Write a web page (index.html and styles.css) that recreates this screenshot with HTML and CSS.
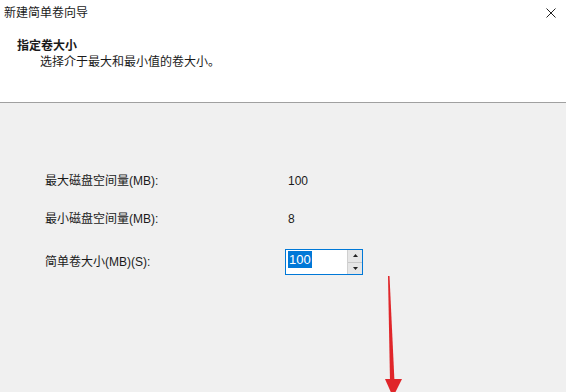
FILE: index.html
```html
<!DOCTYPE html>
<html lang="zh-CN">
<head>
<meta charset="utf-8">
<title>新建简单卷向导</title>
<link rel="stylesheet" href="styles.css">
</head>
<body>
<div class="wizard">
  <header class="header">
    <div class="titlebar">
      <span class="title">新建简单卷向导</span>
      <svg class="close" width="10" height="10" viewBox="0 0 10 10"><path d="M0.5 0.5 L9.5 9.5 M9.5 0.5 L0.5 9.5" stroke="#222" stroke-width="1" fill="none"/></svg>
    </div>
    <div class="heading">指定卷大小</div>
    <div class="subtitle">选择介于最大和最小值的卷大小。</div>
  </header>
  <main class="body">
    <div class="form">
      <div class="label">最大磁盘空间量(MB):</div>
      <div class="value">100</div>
      <div class="label">最小磁盘空间量(MB):</div>
      <div class="value">8</div>
      <div class="label">简单卷大小(MB)(S):</div>
      <div class="spin">
        <div class="spin-text"><span class="sel">100</span></div>
        <div class="spin-btns">
          <div class="btn"><svg width="5" height="3" viewBox="0 0 5 3"><path d="M0 3 L2.5 0 L5 3 Z" fill="#222"/></svg></div>
          <div class="btn"><svg width="5" height="3" viewBox="0 0 5 3"><path d="M0 0 L2.5 3 L5 0 Z" fill="#222"/></svg></div>
        </div>
      </div>
    </div>
    <svg class="arrow" width="22" height="124" viewBox="0 0 22 124">
      <polygon points="5,3 6.5,3 11.5,109 7,109" fill="#e0262a"/>
      <polygon points="2,106 19,106 10,124" fill="#e0262a"/>
    </svg>
  </main>
</div>
</body>
</html>
```
FILE: styles.css
```css
html, body {
  margin: 0;
  padding: 0;
  width: 566px;
  height: 392px;
  overflow: hidden;
  background: #f0f0f0;
}
.wizard {
  font-family: "Liberation Sans", "Noto Sans CJK SC", sans-serif;
  font-size: 12px;
  color: #1a1a1a;
}
.header {
  background: #ffffff;
  height: 102px;
  border-bottom: 1px solid #a0a0a0;
  display: flex;
  flex-direction: column;
}
.titlebar {
  display: flex;
  justify-content: space-between;
  align-items: center;
  height: 26px;
  padding: 0 10px 0 4px;
}
.title {
  line-height: 17px;
  margin-top: 1px;
}
.close {
  display: block;
}
.heading {
  margin-top: 12px;
  padding-left: 17px;
  font-weight: bold;
  line-height: 16px;
}
.subtitle {
  padding-left: 40px;
  font-size: 12px;
  line-height: 16px;
}
.body {
  position: relative;
  height: 289px;
}
.form {
  display: grid;
  grid-template-columns: 240px 78px;
  row-gap: 22px;
  align-items: center;
  padding: 70px 0 0 45px;
}
.label, .value {
  line-height: 16px;
}
.value {
  padding-left: 3px;
}
.spin {
  display: flex;
  width: 78px;
  height: 26px;
  box-sizing: border-box;
  border: 1px solid #0078d7;
  background: #ffffff;
}
.spin-text {
  flex: 1;
  padding: 1px 0 0 2px;
  display: flex;
  align-items: flex-start;
}
.sel {
  background: #0078d7;
  color: #ffffff;
  font-size: 13px;
  line-height: 17px;
  padding: 0 1px;
}
.spin-btns {
  width: 14px;
  display: flex;
  flex-direction: column;
  background: #e6e6e6;
  border-left: 1px solid #d0d0d0;
}
.btn {
  flex: 1;
  display: flex;
  align-items: center;
  justify-content: center;
}
.btn + .btn {
  border-top: 1px solid #c8c8c8;
}
.arrow {
  position: absolute;
  left: 383px;
  top: 170px;
}
```
